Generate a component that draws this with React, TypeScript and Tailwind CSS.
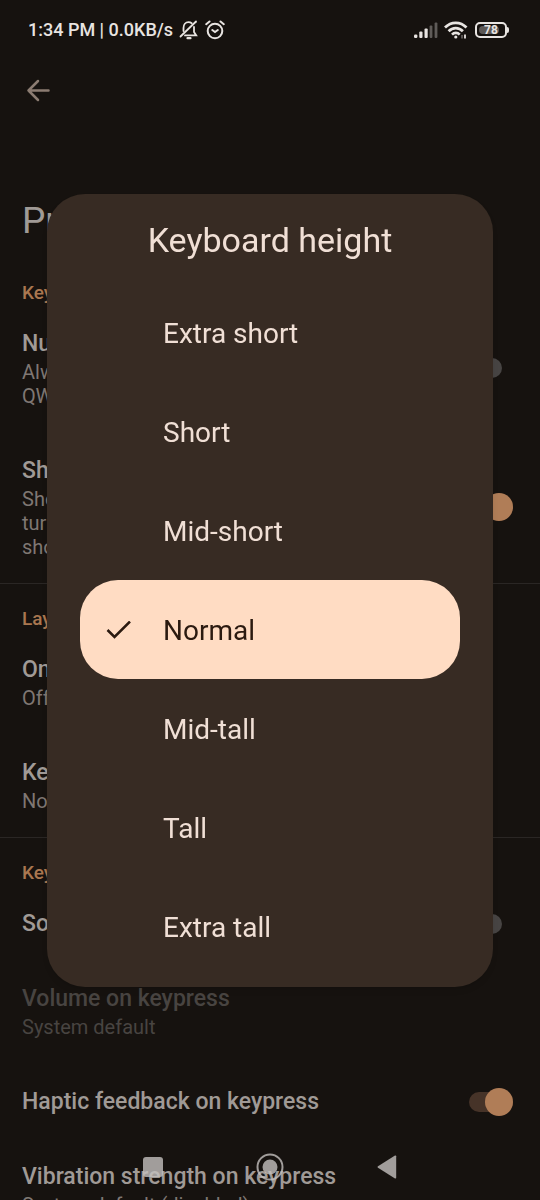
import React, { useState } from 'react';

const HEIGHTS = ['Extra short', 'Short', 'Mid-short', 'Normal', 'Mid-tall', 'Tall', 'Extra tall'];

interface PreferenceRowProps {
  title: string;
  lines?: string[];
  on?: boolean;
  disabled?: boolean;
}

const PreferenceRow: React.FC<PreferenceRowProps> = ({ title, lines, on, disabled }) => {
  const body = (
    <span className={`block min-w-0 flex-1 whitespace-nowrap ${disabled ? 'text-[#484441]' : 'text-[#7f7773]'}`}>
      <span className={`block text-[23px] leading-8 font-medium ${disabled ? '' : 'text-[#a09a96]'}`}>{title}</span>
      {lines?.map((line) => (
        <span key={line} className="block text-[20px] leading-6">{line}</span>
      ))}
    </span>
  );
  const padding = lines ? 'pt-[23px] pb-6' : 'pt-[23px] pb-5';

  if (on === undefined) {
    return (
      <button type="button" disabled={disabled} className={`flex w-full px-[22px] text-left ${padding}`}>
        {body}
      </button>
    );
  }

  return (
    <label className={`flex items-center pl-[22px] pr-[27px] ${padding}`}>
      {body}
      <input
        type="checkbox"
        role="switch"
        defaultChecked={on}
        className="relative h-5 w-11 shrink-0 appearance-none rounded-full before:absolute before:top-0 before:right-[11px] before:size-5 before:rounded-full before:bg-[#474443] before:content-[''] checked:bg-[#463328] checked:before:-top-1 checked:before:right-0 checked:before:size-7 checked:before:bg-[#b07d57]"
      />
    </label>
  );
};

const Section: React.FC<{ title: string; divided?: boolean; children: React.ReactNode }> = ({ title, divided, children }) => (
  <section className={divided ? 'border-t border-[#2a2624]' : ''}>
    <h2 className="px-[22px] pt-[23px] text-[19px] leading-6 font-medium text-[#a97750]">{title}</h2>
    {children}
  </section>
);

const StatusBar = () => (
  <div className="flex h-[60px] items-center pl-7 pr-[31px] text-[#e8e4e1]">
    <span className="text-[18px] leading-6 font-medium whitespace-nowrap">1:34 PM | 0.0KB/s</span>
    <svg className="ml-1.5 size-5" viewBox="0 0 20 20" fill="none" stroke="currentColor" strokeWidth="1.8" strokeLinecap="round">
      <path d="M1.5 16.5 17 1.5" />
      <path d="M4.500 11V8c0-3.400 2-5.800 5-5.800 1.300 0 2.300.4 3.200 1.100M15 7v5l2.200 3.400H6" />
      <path d="M8.500 18.200h3" strokeWidth="2.200" />
    </svg>
    <svg className="ml-1.5 size-5" viewBox="0 0 20 20" fill="none" stroke="currentColor" strokeWidth="2" strokeLinecap="round">
      <circle cx="10" cy="11" r="7.300" />
      <path d="M1.200 4.200 4.500 1.500M18.800 4.200 15.500 1.500M7.300 10l2.700 2 2.800-2" />
    </svg>
    <svg className="ml-auto h-5 w-6" viewBox="0 0 24 20" fill="currentColor">
      <rect x="0" y="14.500" width="3.400" height="3.500" rx="1.200" />
      <rect x="5.300" y="11.500" width="3.200" height="6.500" rx="1" />
      <rect x="10.500" y="8.500" width="3.200" height="9.500" rx="1" />
      <rect x="15.600" y="5.500" width="2.800" height="12.500" rx="1" opacity=".35" />
      <rect x="20.600" y="2.500" width="2.800" height="15.500" rx="1" opacity=".35" />
    </svg>
    <svg className="ml-1.5 h-5 w-6" viewBox="0 0 24 20" fill="none" stroke="currentColor" strokeWidth="2.700">
      <path d="M1 7.500c6-6.300 15.500-6.300 21.500 0M4.600 11.300c4-4.200 10.300-4.200 14.300 0M8 14.600c2.200-2.300 5.500-2.300 7.700 0" />
      <circle cx="11.800" cy="17" r="1.600" fill="currentColor" stroke="none" />
      <path d="M18 15v3.500" strokeWidth="1.600" opacity=".4" />
      <path d="M21 14.500v4" strokeWidth="1.800" />
    </svg>
    <div className="ml-[7px] flex items-center">
      <div className="relative flex h-4 w-8 items-center justify-center rounded-[5px] border-2 border-current">
        <span className="absolute inset-y-0.5 left-0.5 w-5 rounded-sm bg-[#5c5856]" />
        <span className="relative text-[12px] leading-3 font-bold">78</span>
      </div>
      <span className="h-1.5 w-0.5 rounded-r-sm bg-current" />
    </div>
  </div>
);

const NavigationBar = () => (
  <nav className="fixed inset-x-0 bottom-0 z-20 flex h-[66px] items-center justify-center gap-[77px] text-[#c4c0be]/80">
    <button type="button" aria-label="Recent apps" className="flex size-10 items-center justify-center">
      <span className="size-5 rounded-[3px] bg-current" />
    </button>
    <button type="button" aria-label="Home" className="flex size-10 items-center justify-center">
      <svg className="size-7" viewBox="0 0 28 28" fill="none" stroke="currentColor" strokeWidth="2">
        <circle cx="14" cy="14" r="12.500" />
        <circle cx="14" cy="14" r="7.500" fill="currentColor" stroke="none" />
      </svg>
    </button>
    <button type="button" aria-label="Back" className="flex size-10 items-center justify-center">
      <svg className="h-6 w-5" viewBox="0 0 20 24" fill="currentColor">
        <path d="M1 11.200 18 .6c.7-.4 1.200 0 1.200.7v21.400c0 .7-.5 1.100-1.200.7L1 12.800c-.6-.4-.6-1.200 0-1.600Z" />
      </svg>
    </button>
  </nav>
);

const HeightDialog = () => {
  const [height, setHeight] = useState('Normal');

  return (
    <div className="fixed inset-0 z-10 flex items-center justify-center px-[47px] pb-5">
      <div role="dialog" aria-labelledby="height-title" className="w-full max-w-lg rounded-[38px] bg-[#372b23] px-[33px] pb-[11px] shadow-md">
        <h2 id="height-title" className="pt-[26px] pb-[23px] text-center text-[34px] leading-10 text-[#f0dfd5]">Keyboard height</h2>
        <div role="radiogroup" aria-labelledby="height-title">
          {HEIGHTS.map((option) => (
            <label
              key={option}
              className={`flex h-[99px] items-center rounded-[38px] px-[26px] pt-1 text-[28px] leading-9 ${
                option === height ? 'bg-[#ffdcc3] text-[#2b1a10]' : 'text-[#f0dfd5]'
              }`}
            >
              <input
                type="radio"
                name="height"
                checked={option === height}
                onChange={() => setHeight(option)}
                className="sr-only"
              />
              <svg
                className={`mr-8 h-5 w-[25px] shrink-0 ${option === height ? '' : 'invisible'}`}
                viewBox="0 0 25 20"
                fill="none"
                stroke="currentColor"
                strokeWidth="2.500"
              >
                <path d="M1.500 9 8.500 16 24 .5" />
              </svg>
              {option}
            </label>
          ))}
        </div>
      </div>
    </div>
  );
};

export default function App() {
  return (
    <div className="h-screen overflow-hidden bg-[#16120f] font-[Roboto,'Noto_Sans',sans-serif]">
      <StatusBar />
      <main>
        <button type="button" aria-label="Navigate up" className="ml-[22px] flex h-[60px] w-8 items-center justify-center text-[#8c7c72]">
          <svg className="size-6" viewBox="0 0 24 24" fill="none" stroke="currentColor" strokeWidth="2.500" strokeLinecap="round" strokeLinejoin="round">
            <path d="M22.500 12.500H2.500M12 3 2.500 12.500l9.500 9.500" />
          </svg>
        </button>
        <h1 className="px-[22px] pt-[79px] pb-[15px] text-[37px] leading-[44px] text-[#a09a96]">Preferences</h1>
        <Section title="Keys">
          <PreferenceRow title="Number row" lines={['Always show number row', 'QWERTY layouts only']} on={false} />
          <PreferenceRow title="Show emoji switch key" lines={['Show emoji key when', 'turned on, otherwise', 'show language key']} on />
        </Section>
        <Section title="Layout" divided>
          <PreferenceRow title="One-handed mode" lines={['Off']} />
          <PreferenceRow title="Keyboard height" lines={['Normal']} />
        </Section>
        <Section title="Key press" divided>
          <PreferenceRow title="Sound on keypress" on={false} />
          <PreferenceRow title="Volume on keypress" lines={['System default']} disabled />
          <PreferenceRow title="Haptic feedback on keypress" on />
          <PreferenceRow title="Vibration strength on keypress" lines={['System default (disabled)']} />
        </Section>
      </main>
      <HeightDialog />
      <NavigationBar />
    </div>
  );
}
